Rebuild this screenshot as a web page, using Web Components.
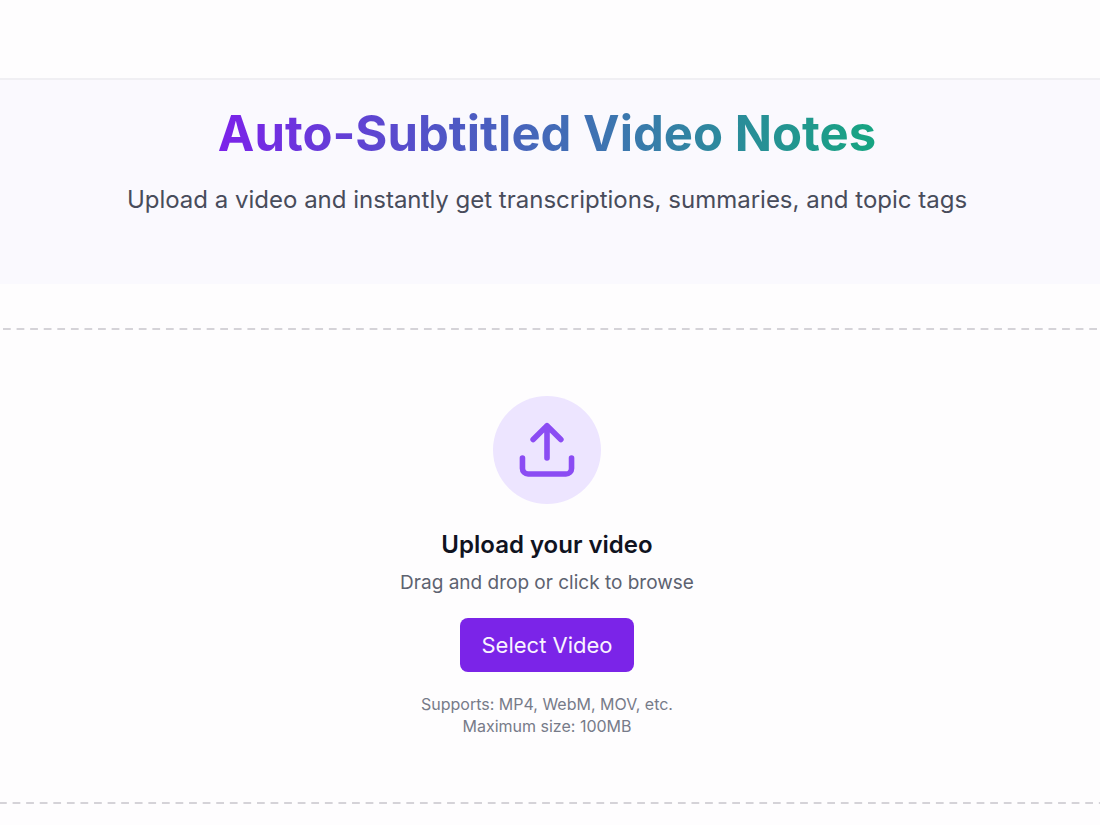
<!DOCTYPE html>
<html lang="en">
<head>
<meta charset="utf-8">
<meta name="viewport" content="width=device-width, initial-scale=1">
<title>Auto-Subtitled Video Notes</title>
<style>
  body { margin: 0; background: #fefdfe; color: #10131f; font-family: Inter, "Liberation Sans", sans-serif; }
</style>
</head>
<body>
<app-page>
  <app-bar slot="header"></app-bar>
  <page-hero>
    <span slot="title">Auto-Subtitled Video Notes</span>
    Upload a video and instantly get transcriptions, summaries, and topic tags
  </page-hero>
  <upload-zone>
    <upload-icon slot="icon"></upload-icon>
    <span slot="title">Upload your video</span>
    <span slot="hint">Drag and drop or click to browse</span>
    <action-button slot="action">Select Video</action-button>
    <span slot="formats">Supports: MP4, WebM, MOV, etc.</span>
    <span slot="limit">Maximum size: 100MB</span>
  </upload-zone>
</app-page>
<script>
class BaseElement extends HTMLElement {
  constructor() {
    super();
    this.attachShadow({ mode: "open" }).innerHTML = this.constructor.markup;
  }
}

customElements.define("app-page", class extends BaseElement {
  static markup = `
    <style>
      :host { display: block; }
      main { display: flex; flex-direction: column; gap: 44px; padding-bottom: 20px; }
    </style>
    <slot name="header"></slot>
    <main><slot></slot></main>`;
});

customElements.define("app-bar", class extends BaseElement {
  static markup = `
    <style>
      :host { display: block; }
      header { height: 78px; border-bottom: 2px solid #f0eff3; }
    </style>
    <header></header>`;
});

customElements.define("page-hero", class extends BaseElement {
  static markup = `
    <style>
      :host { display: block; background: #faf9fe; }
      section { display: flex; flex-direction: column; align-items: center; gap: 20px;
        padding: 26px 26px 66px 20px; text-align: center; }
      h1 { margin: 0; font-size: 49px; line-height: 56px; font-weight: 700; color: transparent;
        background: linear-gradient(90deg, #7c22ea, #4f57c5 35%, #3b78ae 62%, #16a581);
        -webkit-background-clip: text; background-clip: text; }
      p { margin: 0; font-size: 24px; line-height: 36px; color: #484c5b; }
    </style>
    <section>
      <h1><slot name="title"></slot></h1>
      <p><slot></slot></p>
    </section>`;
});

customElements.define("upload-icon", class extends BaseElement {
  static markup = `
    <style>
      :host { display: flex; align-items: center; justify-content: center;
        width: 108px; height: 108px; border-radius: 50%; background: #ede5ff; }
      svg { width: 64px; height: 64px; fill: none; stroke: #8b4cf3; stroke-width: 2.1;
        stroke-linecap: round; stroke-linejoin: round; }
    </style>
    <svg viewBox="0 0 24 24" aria-hidden="true">
      <path d="M2.8 15v3.9a2.1 2.1 0 0 0 2.1 2.1h14.2a2.1 2.1 0 0 0 2.1-2.1V15M6.8 8.1 12 2.9l5.2 5.2M12 2.9V15"/>
    </svg>`;
});

customElements.define("action-button", class extends BaseElement {
  static markup = `
    <style>
      :host { display: block; }
      button { display: block; padding: 12px 21px; border: 0; border-radius: 8px;
        background: #7b24e8; color: #f9f3ff; font: 400 22px/30px Inter, "Liberation Sans", sans-serif;
        cursor: pointer; }
    </style>
    <button type="button"><slot></slot></button>`;
});

customElements.define("upload-zone", class extends BaseElement {
  static markup = `
    <style>
      :host { display: block; }
      .dashes { height: 2px; background: linear-gradient(90deg, #d5d3d8 8px, transparent 8px) 3px 0 / calc(100% / 81) 100%; }
      .dashes.end { background-position-x: -1px; }
      section { display: flex; flex-direction: column; align-items: center;
        padding: 66px 26px 65px 20px; text-align: center; }
      h2, p { margin: 0; }
      h2 { margin-top: 25px; font-size: 24px; line-height: 32px; font-weight: 600; color: #10131f; }
      .hint { margin: 8px 0 21px; font-size: 19px; line-height: 28px; color: #5d6270; }
      .notes { margin-top: 21px; font-size: 16px; line-height: 22px; color: #777b89; }
    </style>
    <div class="dashes"></div>
    <section>
      <slot name="icon"></slot>
      <h2><slot name="title"></slot></h2>
      <p class="hint"><slot name="hint"></slot></p>
      <slot name="action"></slot>
      <div class="notes">
        <p><slot name="formats"></slot></p>
        <p><slot name="limit"></slot></p>
      </div>
    </section>
    <div class="dashes end"></div>`;
});
</script>
</body>
</html>
